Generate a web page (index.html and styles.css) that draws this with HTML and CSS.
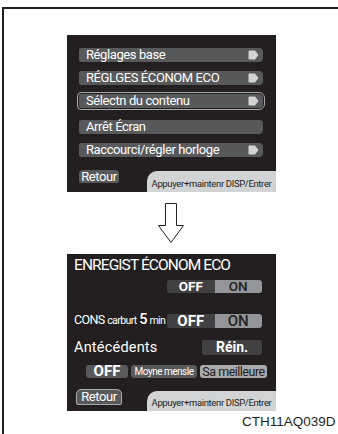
FILE: index.html
```html
<!DOCTYPE html>
<html lang="fr">
<head>
    <meta charset="UTF-8">
    <title>ENREGIST ÉCONOM ECO</title>
    <link rel="stylesheet" href="styles.css">
</head>
<body>
    <div class="frame">

        <div class="panel menu">
            <div class="rows">
                <div class="row">
                    <span>Réglages base</span>
                    <svg class="go" width="11" height="10" viewBox="0 0 11 10"><path d="M1.5 0.5h5.5l3.5 4.5-3.5 4.5h-5.5a1 1 0 0 1-1-1v-7a1 1 0 0 1 1-1z"/></svg>
                </div>
                <div class="row">
                    <span>RÉGLGES ÉCONOM ECO</span>
                    <svg class="go" width="11" height="10" viewBox="0 0 11 10"><path d="M1.5 0.5h5.5l3.5 4.5-3.5 4.5h-5.5a1 1 0 0 1-1-1v-7a1 1 0 0 1 1-1z"/></svg>
                </div>
                <div class="row selected">
                    <span>Sélectn du contenu</span>
                    <svg class="go" width="11" height="10" viewBox="0 0 11 10"><path d="M1.5 0.5h5.5l3.5 4.5-3.5 4.5h-5.5a1 1 0 0 1-1-1v-7a1 1 0 0 1 1-1z"/></svg>
                </div>
                <div class="row">
                    <span>Arrêt Écran</span>
                </div>
                <div class="row">
                    <span>Raccourci/régler horloge</span>
                    <svg class="go" width="11" height="10" viewBox="0 0 11 10"><path d="M1.5 0.5h5.5l3.5 4.5-3.5 4.5h-5.5a1 1 0 0 1-1-1v-7a1 1 0 0 1 1-1z"/></svg>
                </div>
            </div>
            <div class="foot">
                <span class="back">Retour</span>
                <span class="hint">Appuyer+maintenr DISP/Entrer</span>
            </div>
        </div>

        <div class="down">
            <svg width="27" height="41" viewBox="0 0 27 41"><polygon points="7.5,0.5 18.5,0.5 18.5,22.5 25.5,22.5 13,39.5 0.5,22.5 7.5,22.5"/></svg>
        </div>

        <div class="panel eco">
            <div class="title">ENREGIST ÉCONOM ECO</div>
            <div class="line first">
                <div class="switch small">
                    <span class="off">OFF</span>
                    <span class="on">ON</span>
                </div>
            </div>
            <div class="line cons">
                <span class="label">CONS <small>carburt</small> <b>5</b> <small>min</small></span>
                <div class="switch">
                    <span class="off">OFF</span>
                    <span class="on">ON</span>
                </div>
            </div>
            <div class="line hist">
                <span class="label wide">Antécédents</span>
                <span class="reset">Réin.</span>
            </div>
            <div class="choices">
                <span class="pick big">OFF</span>
                <span class="pick narrow">Moyne mensle</span>
                <span class="pick light">Sa meilleure</span>
            </div>
            <div class="foot">
                <span class="back outlined">Retour</span>
                <span class="hint">Appuyer+maintenr DISP/Entrer</span>
            </div>
        </div>

        <div class="code">CTH11AQ039D</div>
    </div>
</body>
</html>
```

FILE: styles.css
```css
html, body {
    margin: 0;
    padding: 0;
    overflow: hidden;
    background: #fff;
}

body {
    width: 338px;
    height: 434px;
    font-family: Roboto, "DejaVu Sans Condensed", sans-serif;
    white-space: nowrap;
}

.frame {
    box-sizing: border-box;
    height: 427px;
    margin: 7px 0 0 2px;
    padding: 26px 0 0 63px;
    border-top: 2px solid #231f20;
    border-left: 2px solid #231f20;
}

.panel {
    box-sizing: border-box;
    width: 209px;
    height: 157px;
    background: #231f20;
    color: #fff;
    display: flex;
    flex-direction: column;
}

/* menu screen */

.menu {
    padding-top: 13px;
}

.rows {
    display: flex;
    flex-direction: column;
    gap: 9px;
    margin: 0 13px 0 12px;
}

.row {
    height: 14px;
    display: flex;
    align-items: center;
    justify-content: space-between;
    padding: 0 4px 0 7px;
    background: #58595b;
    border-radius: 2px 4px 4px 2px;
    font-size: 13px;
    letter-spacing: -0.4px;
    line-height: 14px;
}

.row.selected {
    outline: 1px solid #a7a9ac;
    outline-offset: 1px;
    margin-bottom: 3px;
}

.go {
    fill: #d1d3d4;
}

.foot {
    margin-top: auto;
    display: flex;
    align-items: flex-end;
    padding-left: 12px;
}

.back {
    box-sizing: border-box;
    width: 40px;
    height: 13px;
    margin-bottom: 9px;
    background: #58595b;
    border-radius: 4px 4px 2px 2px;
    font-size: 13px;
    letter-spacing: -0.4px;
    line-height: 13px;
    text-align: center;
}

.hint {
    box-sizing: border-box;
    width: 129px;
    height: 21px;
    margin-left: auto;
    padding-top: 7px;
    background: #d1d3d4;
    border-radius: 10px 0 0 0;
    color: #231f20;
    font-size: 9.5px;
    letter-spacing: -0.35px;
    line-height: 12px;
    text-align: center;
}

/* arrow between screens */

.down {
    width: 209px;
    height: 40px;
    margin: 11px 0 11px;
    display: flex;
    justify-content: center;
}

.down polygon {
    fill: #fff;
    stroke: #231f20;
    stroke-width: 1;
}

/* eco screen */

.eco {
    padding-top: 3px;
}

.title {
    padding-left: 7px;
    font-size: 15.5px;
    letter-spacing: -0.9px;
    line-height: 16px;
}

.line {
    display: flex;
    align-items: center;
    justify-content: space-between;
    padding: 0 14px 0 7px;
}

.line.first {
    justify-content: flex-end;
    margin-top: 7px;
}

.line.cons {
    margin-top: 20px;
}

.line.hist {
    margin-top: 12px;
}

.label {
    font-size: 12.5px;
    letter-spacing: -0.6px;
    line-height: 14px;
}

.label small {
    font-size: 10.5px;
}

.label b {
    font-size: 14.5px;
    font-weight: 500;
}

.label.wide {
    font-size: 14.5px;
    letter-spacing: 0.2px;
}

.switch {
    width: 95px;
    height: 14px;
    display: flex;
    font-weight: bold;
    font-size: 15px;
    line-height: 14px;
}

.switch.small {
    height: 13px;
    font-size: 13.5px;
    line-height: 13px;
}

.switch span {
    flex: 1;
    text-align: center;
}

.switch .off {
    background: #414042;
    border-radius: 3px 0 0 3px;
}

.switch .on {
    background: #939598;
    color: #231f20;
    border-radius: 0 3px 3px 0;
    font-weight: 500;
}

.reset {
    width: 60px;
    height: 15px;
    background: #414042;
    border-radius: 2px 3px 3px 2px;
    font-weight: bold;
    font-size: 14px;
    line-height: 15px;
    text-align: center;
}

.choices {
    display: flex;
    gap: 3px;
    margin-top: 10px;
    padding-left: 19px;
}

.pick {
    height: 13px;
    background: #58595b;
    border-radius: 3px;
    line-height: 13px;
    text-align: center;
}

.pick.big {
    width: 42px;
    font-weight: bold;
    font-size: 15px;
}

.pick.narrow {
    width: 66px;
    font-size: 10px;
    letter-spacing: -0.5px;
}

.pick.light {
    width: 67px;
    background: #a7a9ac;
    color: #231f20;
    font-size: 12.5px;
    letter-spacing: -0.5px;
}

.eco .foot {
    padding-left: 9px;
}

.back.outlined {
    width: 46px;
    height: 16px;
    margin-bottom: 6px;
    border: 1px solid #a7a9ac;
    border-radius: 5px 5px 2px 2px;
    line-height: 14px;
}

.eco .hint {
    height: 20px;
    padding-top: 6px;
}

.code {
    margin: 4px -8px 0 175px;
    color: #231f20;
    font-family: "Liberation Sans", Arial, sans-serif;
    font-size: 13.5px;
    line-height: 14px;
}
```
